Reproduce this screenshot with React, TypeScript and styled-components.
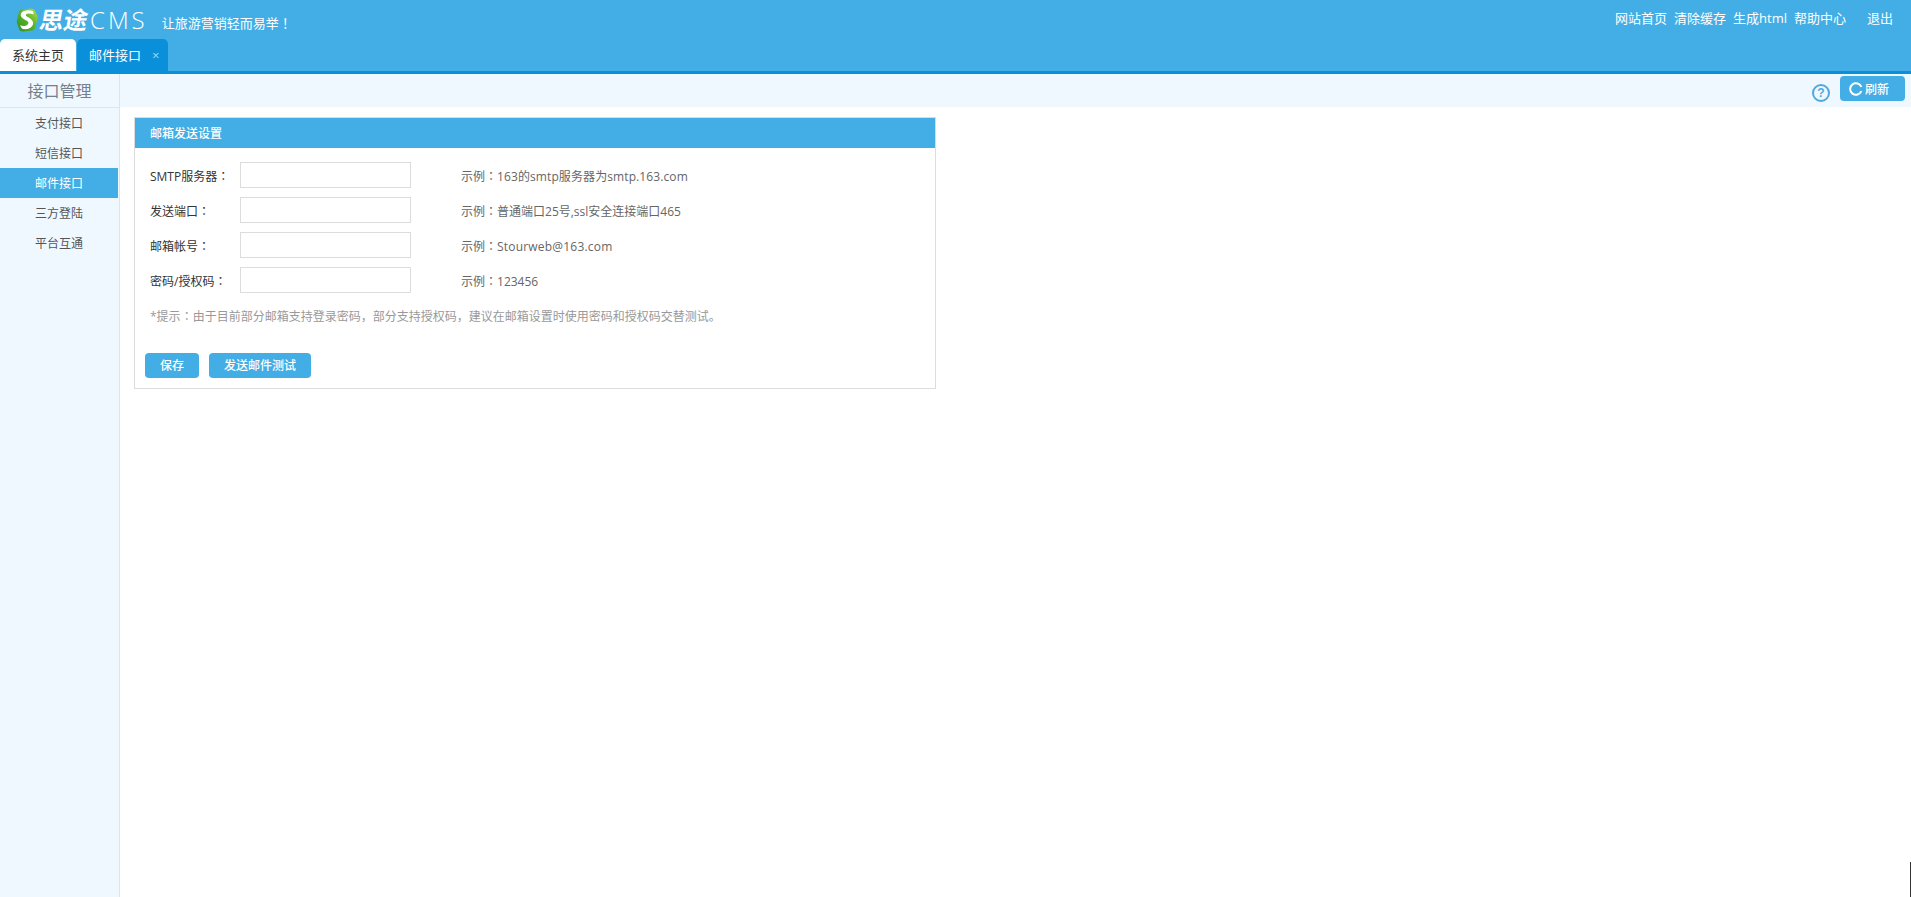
import { createGlobalStyle, styled } from "styled-components";

const GlobalStyle = createGlobalStyle`
  html, body {
    margin: 0;
    padding: 0;
    background: #fff;
    overflow: hidden;
  }
  body {
    font-family: "Open Sans", "Noto Sans CJK SC", sans-serif;
    font-size: 12px;
    color: #333;
  }
`;

const Page = styled.div`
  width: 1911px;
  height: 897px;
  display: flex;
  flex-direction: column;
`;

const Header = styled.header`
  height: 71px;
  background: #43aee5;
  border-bottom: 3px solid #0a90db;
  display: flex;
  flex-direction: column;
`;

const TopBar = styled.div`
  height: 39px;
  display: flex;
  align-items: flex-start;
  justify-content: space-between;
`;

const Brand = styled.div`
  display: flex;
  align-items: center;
  height: 39px;
  padding-left: 16px;
`;

const BrandCn = styled.span`
  display: inline-block;
  margin-left: 2px;
  font-size: 24px;
  line-height: 39px;
  font-weight: 700;
  transform: skewX(-10deg);
  color: #fff;
`;

const BrandEn = styled.span`
  margin-left: 2px;
  font-size: 24px;
  line-height: 39px;
  font-weight: 300;
  letter-spacing: 3px;
  color: #fff;
`;

const Slogan = styled.span`
  margin-left: 14px;
  margin-top: 5px;
  font-size: 13px;
  color: #fff;
`;

/* full-width punctuation centred in its cell, as in the original face */
const Punct = styled.span`
  font-family: "Noto Sans CJK JP", sans-serif;
`;

const TopNav = styled.nav`
  display: flex;
  padding: 9px 18px 0 0;
`;

const NavLink = styled.a<{ $gap?: number }>`
  margin-left: ${(p) => p.$gap ?? 7}px;
  font-size: 13px;
  line-height: 18px;
  color: #fff;
`;

const TabBar = styled.div`
  height: 32px;
  display: flex;
  gap: 1px;
`;

const Tab = styled.div<{ $active?: boolean; $width: number }>`
  width: ${(p) => p.$width}px;
  box-sizing: border-box;
  height: 32px;
  padding-left: 12px;
  border-radius: 5px 5px 0 0;
  background: ${(p) => (p.$active ? "#0a90db" : "#fff")};
  color: ${(p) => (p.$active ? "#fff" : "#333")};
  font-size: 13px;
  line-height: 32px;
  display: flex;
  align-items: center;
`;

const TabClose = styled.span`
  margin-left: 11px;
  font-size: 13px;
  color: #a9d6f2;
`;

const Body = styled.div`
  flex: 1;
  display: flex;
  min-height: 0;
`;

const Sidebar = styled.aside`
  width: 119px;
  flex: none;
  background: #f0f8ff;
  border-right: 1px solid #dbe5ef;
`;

const SideTitle = styled.div`
  height: 33px;
  border-bottom: 1px solid #dbe5ef;
  font-size: 16px;
  line-height: 35px;
  text-align: center;
  color: #75808c;
`;

const SideItem = styled.div<{ $active?: boolean }>`
  height: 30px;
  width: 118px;
  font-size: 12px;
  line-height: 32px;
  text-align: center;
  color: ${(p) => (p.$active ? "#fff" : "#555")};
  background: ${(p) => (p.$active ? "#43aee5" : "transparent")};
`;

const Main = styled.main`
  flex: 1;
  min-width: 0;
`;

const Toolbar = styled.div`
  height: 33px;
  background: #f0f8ff;
  display: flex;
  justify-content: flex-end;
  padding: 2px 6px 0 0;
  box-sizing: border-box;
`;

const HelpIcon = styled.span`
  width: 18px;
  height: 18px;
  box-sizing: border-box;
  margin: 8px 10px 0 0;
  border: 2px solid #4ea9e0;
  border-radius: 50%;
  color: #4ea9e0;
  font-family: "Liberation Sans", sans-serif;
  font-size: 12px;
  font-weight: 700;
  line-height: 14px;
  text-align: center;
`;

const RefreshButton = styled.div`
  width: 65px;
  height: 25px;
  box-sizing: border-box;
  padding-left: 9px;
  border-radius: 4px;
  background: #43aee5;
  color: #fff;
  font-size: 12px;
  font-weight: 500;
  display: flex;
  align-items: center;
  gap: 2px;
`;

const Panel = styled.section`
  width: 802px;
  height: 272px;
  box-sizing: border-box;
  margin: 10px 0 0 14px;
  border: 1px solid #dcdcdc;
`;

const PanelTitle = styled.h2`
  margin: 0;
  height: 30px;
  padding-left: 15px;
  background: #43aee5;
  color: #fff;
  font-size: 12px;
  font-weight: 500;
  line-height: 32px;
`;

const Form = styled.div`
  padding: 14px 0 0 15px;
  display: flex;
  flex-direction: column;
  gap: 9px;
`;

const Row = styled.div`
  display: flex;
  align-items: center;
  height: 26px;
`;

const Label = styled.label`
  width: 90px;
  flex: none;
  padding-top: 2px;
  color: #333;
  font-size: 12px;
`;

const Input = styled.input`
  width: 171px;
  height: 26px;
  box-sizing: border-box;
  border: 1px solid #dcdcdc;
  background: #fff;
  outline: none;
  padding: 0 6px;
`;

const Example = styled.span`
  margin-left: 50px;
  padding-top: 2px;
  color: #666;
  font-size: 12px;
`;

const ExampleText = styled.span<{ $track?: number }>`
  letter-spacing: ${(p) => p.$track ?? 0}px;
`;

const Note = styled.p`
  margin: 0;
  height: 24px;
  padding: 11px 0 0 15px;
  color: #999;
  font-size: 12px;
  line-height: 24px;
`;

const Actions = styled.div`
  display: flex;
  gap: 10px;
  padding: 25px 0 0 10px;
`;

const ActionButton = styled.button<{ $width: number }>`
  width: ${(p) => p.$width}px;
  height: 25px;
  padding: 0;
  border: 0;
  border-radius: 4px;
  background: #43aee5;
  color: #fff;
  font-family: inherit;
  font-size: 12px;
  font-weight: 500;
  line-height: 25px;
`;

const ScrollMark = styled.div`
  position: fixed;
  right: 0;
  bottom: 0;
  width: 1px;
  height: 35px;
  background: #333;
`;

function Logo() {
  return (
    <svg width="22" height="24" viewBox="0 0 22 24" style={{ flex: "none" }}>
      <defs>
        <linearGradient id="leaf" x1="0" y1="1" x2="1" y2="0">
          <stop offset="0" stopColor="#2f8f1e" />
          <stop offset="0.55" stopColor="#5cb52c" />
          <stop offset="1" stopColor="#b9de4c" />
        </linearGradient>
      </defs>
      <path d="M5 1.5L15 0.5Q17 0.5 18.5 2L21.5 8Q22 9.5 21.5 11L19 20Q18.5 22 16.5 22.5L7 23.5Q5 23.5 3.5 22L1 15Q0.5 13.5 1 12L3 3.5Q3.5 2 5 1.5Z" fill="url(#leaf)" />
      <path d="M17 3C12 1.5 6.5 2.5 5 5.5C3.5 9.5 8 11 11 12.8C13.5 14.5 12.5 17 9.5 17.8C8 18.2 6 18 4 17.2L6 20.8C10.5 22 15.5 20.5 17 16.5C18 12.5 14 10.3 11.2 8.8C9 7.7 9.5 5.8 12 5.5C14 5.3 16 5.8 17.8 6.5Z" fill="#fff" />
    </svg>
  );
}

function RefreshIcon() {
  return (
    <svg width="14" height="14" viewBox="0 0 14 14" fill="none" style={{ flex: "none" }}>
      <path d="M12.4 5A5.8 5.8 0 1 0 12.4 9" stroke="#fff" strokeWidth="2" />
    </svg>
  );
}

const menu = ["支付接口", "短信接口", "邮件接口", "三方登陆", "平台互通"];

const fields = [
  { label: "SMTP服务器", example: "163的smtp服务器为smtp.163.com", track: 0.1 },
  { label: "发送端口", example: "普通端口25号,ssl安全连接端口465" },
  { label: "邮箱帐号", example: "Stourweb@163.com", track: 0.2 },
  { label: "密码/授权码", example: "123456" },
];

export default function App() {
  return (
    <Page>
      <GlobalStyle />
      <Header>
        <TopBar>
          <Brand>
            <Logo />
            <BrandCn>思途</BrandCn>
            <BrandEn>CMS</BrandEn>
            <Slogan>
              让旅游营销轻而易举<Punct>！</Punct>
            </Slogan>
          </Brand>
          <TopNav>
            <NavLink>网站首页</NavLink>
            <NavLink>清除缓存</NavLink>
            <NavLink>生成html</NavLink>
            <NavLink>帮助中心</NavLink>
            <NavLink $gap={21}>退出</NavLink>
          </TopNav>
        </TopBar>
        <TabBar>
          <Tab $width={76}>系统主页</Tab>
          <Tab $width={91} $active>
            邮件接口
            <TabClose>×</TabClose>
          </Tab>
        </TabBar>
      </Header>
      <Body>
        <Sidebar>
          <SideTitle>接口管理</SideTitle>
          {menu.map((item) => (
            <SideItem key={item} $active={item === "邮件接口"}>
              {item}
            </SideItem>
          ))}
        </Sidebar>
        <Main>
          <Toolbar>
            <HelpIcon>?</HelpIcon>
            <RefreshButton>
              <RefreshIcon />
              刷新
            </RefreshButton>
          </Toolbar>
          <Panel>
            <PanelTitle>邮箱发送设置</PanelTitle>
            <Form>
              {fields.map((f) => (
                <Row key={f.label}>
                  <Label>
                    {f.label}
                    <Punct>：</Punct>
                  </Label>
                  <Input />
                  <Example>
                    示例<Punct>：</Punct>
                    <ExampleText $track={f.track}>{f.example}</ExampleText>
                  </Example>
                </Row>
              ))}
            </Form>
            <Note>
              *提示<Punct>：</Punct>由于目前部分邮箱支持登录密码<Punct>，</Punct>部分支持授权码<Punct>，</Punct>
              建议在邮箱设置时使用密码和授权码交替测试。
            </Note>
            <Actions>
              <ActionButton $width={54}>保存</ActionButton>
              <ActionButton $width={102}>发送邮件测试</ActionButton>
            </Actions>
          </Panel>
        </Main>
      </Body>
      <ScrollMark />
    </Page>
  );
}
